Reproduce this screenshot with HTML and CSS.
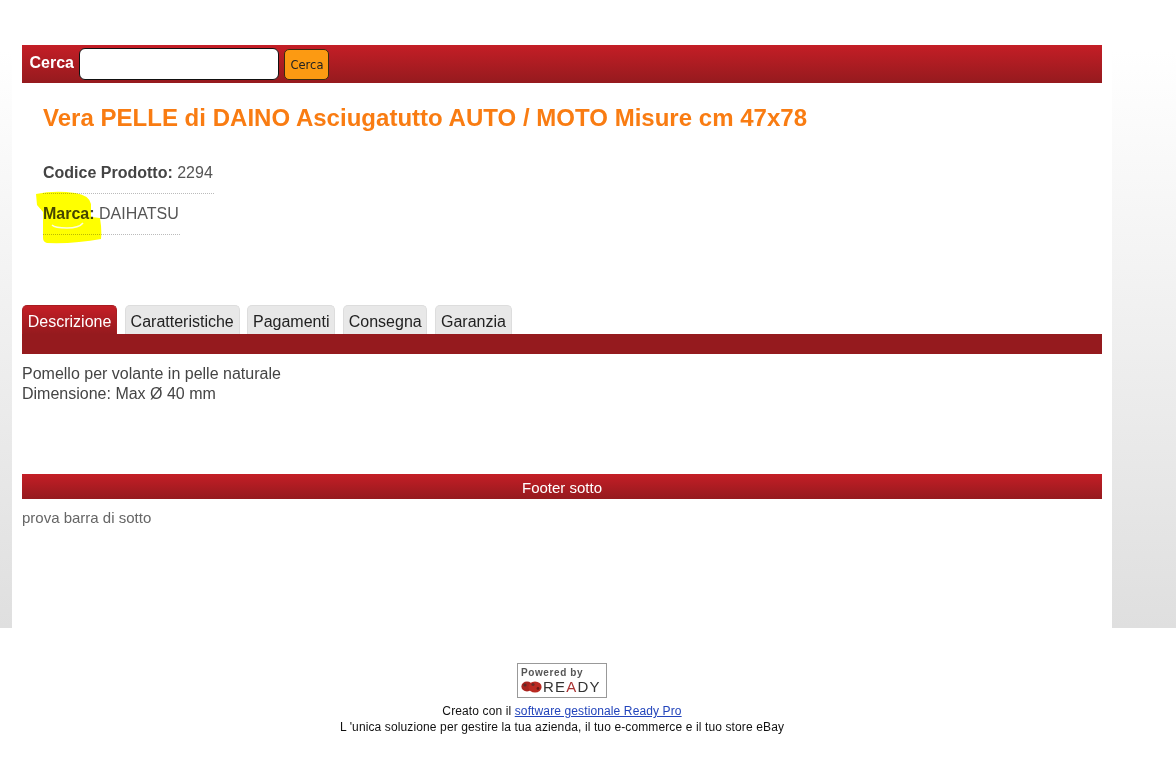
FILE: index.html
```html
<!DOCTYPE html>
<html lang="it">
<head>
<meta charset="utf-8">
<title>Vera PELLE di DAINO</title>
<link rel="stylesheet" href="styles.css">
</head>
<body>
<div class="backdrop">
  <main class="sheet">
    <form class="search">
      <label class="search-label">Cerca</label>
      <input class="search-input" type="text">
      <button class="search-btn" type="button">Cerca</button>
    </form>
    <section class="product">
      <h1 class="title">Vera PELLE di DAINO Asciugatutto AUTO / MOTO Misure cm 47x78</h1>
      <div class="spec spec-code"><b>Codice Prodotto:</b> 2294</div>
      <div class="spec spec-brand"><b>Marca:</b> DAIHATSU
        <svg class="highlight" width="70" height="56" viewBox="0 0 70 56">
          <path fill="#ffff00" d="M1 4 Q20 0 40 3 Q54 5 56 14 L56 27 L65 28 Q67 40 66 49 Q40 54 12 53 Q8 52 8 48 L8 22 L2 15 Z"/>
          <path fill="none" stroke="#fbfbe0" stroke-width="1.5" d="M17 35 Q20 38 32 38 Q44 38 48 33"/>
        </svg>
      </div>
    </section>
    <nav class="tabs">
      <span class="tab tab-active">Descrizione</span>
      <span class="tab">Caratteristiche</span>
      <span class="tab">Pagamenti</span>
      <span class="tab">Consegna</span>
      <span class="tab">Garanzia</span>
    </nav>
    <div class="tabbar"></div>
    <div class="desc">Pomello per volante in pelle naturale<br>Dimensione: Max Ø 40 mm</div>
    <div class="footer-bar">Footer sotto</div>
    <p class="footer-text">prova barra di sotto</p>
  </main>
</div>
<footer class="credits">
  <div class="badge">
    <span class="badge-top">Powered by</span>
    <span class="badge-logo">
      <svg width="21" height="12" viewBox="0 0 21 12">
        <ellipse cx="6" cy="5.5" rx="5.6" ry="5" fill="#a8241f"/>
        <ellipse cx="14" cy="6" rx="6.6" ry="5.6" fill="#b92a22"/>
        <circle cx="4" cy="4" r="1.6" fill="#5a2a26"/>
        <circle cx="12" cy="3.5" r="1.6" fill="#6a2a26"/>
        <circle cx="17" cy="7.5" r="1.4" fill="#6a1a16"/>
      </svg>
      <span class="badge-word">RE<span class="badge-a">A</span>DY</span>
    </span>
  </div>
  <div class="credit-line">Creato con il <a href="#">software gestionale Ready Pro</a></div>
  <div class="credit-line">L 'unica soluzione per gestire la tua azienda, il tuo e-commerce e il tuo store eBay</div>
</footer>
</body>
</html>
```
FILE: styles.css
```css
* { box-sizing: border-box; }
html, body { margin: 0; padding: 0; background: #fff; font-family: "Liberation Sans", Arial, sans-serif; }
.backdrop { height: 628px; background: linear-gradient(to bottom, #ffffff 0%, #ffffff 8%, #dfdfdf 100%); padding-left: 12px; }
.sheet { width: 1100px; height: 628px; background: #fff; padding: 45px 10px 0; }
.search { height: 38px; display: flex; align-items: center; padding-left: 7.5px; background: linear-gradient(to bottom, #c41e26, #951a1e); }
.search-label { color: #fff; font-weight: bold; font-size: 16px; margin-right: 5.5px; position: relative; top: -1px; }
.search-input { width: 200px; height: 32px; border: 1px solid #111; border-radius: 6px; background: #fff; margin: 0 5px 0 0; padding: 0; }
.search-btn { width: 45px; height: 31px; border: 1px solid #3a2a10; border-radius: 5px; background: #fc9a12; color: #222; font: 11.5px "DejaVu Sans", Tahoma, sans-serif; padding: 2px 0 0; }
.product { height: 222px; padding: 21px 0 0 21px; }
.title { margin: 0; font-size: 24px; line-height: 28px; font-weight: bold; letter-spacing: 0.02px; color: #f97c12; }
.spec { position: relative; width: fit-content; font-size: 16px; line-height: 20px; color: #555; border-bottom: 1px dotted #bbb; }
.spec b { color: #444; }
.spec-code { margin-top: 31px; padding-bottom: 10px; width: 171px; }
.spec-brand { margin-top: 10px; padding-bottom: 10px; width: 137px; }
.highlight { position: absolute; left: -8px; top: -14px; mix-blend-mode: multiply; }
.tabs { display: flex; height: 29px; gap: 7.75px; }
.tab { display: block; height: 29px; padding: 6px 4.75px 0; font-size: 16px; line-height: 19px; color: #222; background: #e8e8e8; border: 1px solid #ddd; border-bottom: 0; border-radius: 5px 5px 0 0; }
.tab-active { background: linear-gradient(to bottom, #c41e26, #951a1e); border-color: #a81c20; color: #fff; }
.tabbar { height: 20px; background: #951a1e; }
.desc { margin-top: 10px; font-size: 16px; line-height: 20px; color: #444; }
.footer-bar { margin-top: 70px; height: 25px; line-height: 28px; text-align: center; font-size: 15px; color: #fff; background: linear-gradient(to bottom, #c41e26, #951a1e); }
.footer-text { margin: 10px 0 0; font-size: 15px; line-height: 18px; color: #666; }
.credits { width: 1124px; padding-top: 35px; text-align: center; font-size: 12px; line-height: 16px; letter-spacing: 0.12px; color: #111; }
.badge { display: flex; flex-direction: column; width: 90px; height: 35px; margin: 0 auto 5px; padding: 2px 3px 0; border: 1px solid #999; text-align: left; background: #fff; letter-spacing: 0; }
.badge-top { font: bold 10px/13px "Liberation Sans", sans-serif; letter-spacing: 0.6px; color: #555; }
.badge-logo { display: flex; align-items: center; gap: 1px; height: 15px; }
.badge-word { font: 15px/15px "Liberation Sans", sans-serif; letter-spacing: 1.2px; color: #333; }
.badge-a { color: #a33; }
.credit-line a { color: #2244bb; }
```
